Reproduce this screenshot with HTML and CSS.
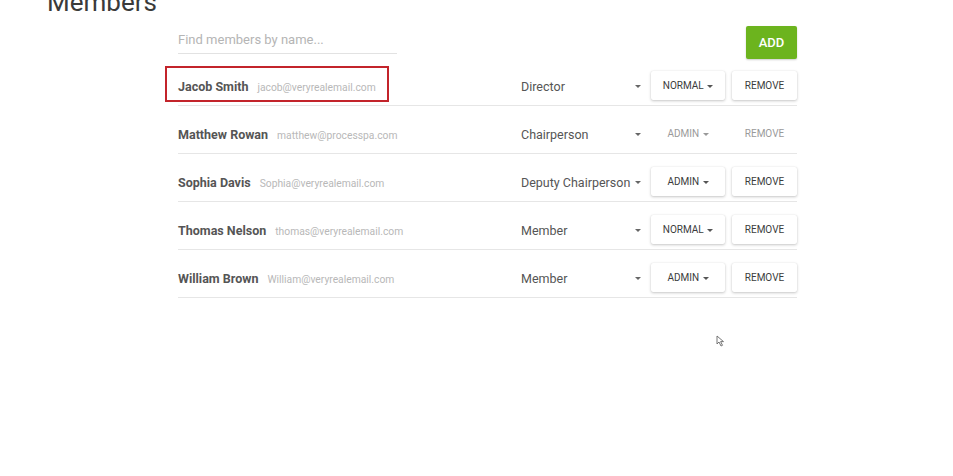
FILE: index.html
```html
<!DOCTYPE html>
<html>
<head>
<meta charset="utf-8">
<link rel="stylesheet" href="styles.css">
</head>
<body>
<h1 class="title">Members</h1>
<main class="panel">
  <div class="toolbar">
    <div class="search">Find members by name...</div>
    <button class="add">ADD</button>
  </div>
  <ul class="list">
    <li class="row">
      <div class="who"><span class="name">Jacob Smith</span><span class="email">jacob@veryrealemail.com</span></div>
      <div class="role">Director<span class="caret"></span></div>
      <button class="btn perm">NORMAL <span class="mini"></span></button>
      <button class="btn rm">REMOVE</button>
      <div class="highlight"></div>
    </li>
    <li class="row flat">
      <div class="who"><span class="name">Matthew Rowan</span><span class="email">matthew@processpa.com</span></div>
      <div class="role">Chairperson<span class="caret"></span></div>
      <button class="btn perm">ADMIN <span class="mini"></span></button>
      <button class="btn rm">REMOVE</button>
    </li>
    <li class="row">
      <div class="who"><span class="name">Sophia Davis</span><span class="email">Sophia@veryrealemail.com</span></div>
      <div class="role">Deputy Chairperson<span class="caret"></span></div>
      <button class="btn perm">ADMIN <span class="mini"></span></button>
      <button class="btn rm">REMOVE</button>
    </li>
    <li class="row">
      <div class="who"><span class="name">Thomas Nelson</span><span class="email">thomas@veryrealemail.com</span></div>
      <div class="role">Member<span class="caret"></span></div>
      <button class="btn perm">NORMAL <span class="mini"></span></button>
      <button class="btn rm">REMOVE</button>
    </li>
    <li class="row">
      <div class="who"><span class="name">William Brown</span><span class="email">William@veryrealemail.com</span></div>
      <div class="role">Member<span class="caret"></span></div>
      <button class="btn perm">ADMIN <span class="mini"></span></button>
      <button class="btn rm">REMOVE</button>
    </li>
  </ul>
</main>
<svg class="cursor" width="10" height="12" viewBox="0 0 10 12"><path d="M1 1 L1 9 L3 7 L5 11 L6.5 10.3 L4.6 6.6 L7.5 6.6 Z" fill="#fff" stroke="#666" stroke-width="0.9"/></svg>
</body>
</html>
```
FILE: styles.css
```css
* { box-sizing: border-box; }
html, body { margin: 0; padding: 0; background: #fff; }
body {
  font-family: Roboto, "Noto Sans", "Liberation Sans", sans-serif;
  color: #555;
  width: 953px;
  height: 476px;
  overflow: hidden;
  position: relative;
}
.title {
  margin: -13px 0 0 47px;
  font-size: 26px;
  font-weight: 400;
  line-height: 30px;
  color: #3a3a3a;
  height: 17px;
}
.panel {
  margin-left: 178px;
  width: 619px;
}
.toolbar {
  display: flex;
  justify-content: space-between;
  align-items: flex-start;
  height: 32px;
  margin-top: 22px;
}
.search {
  width: 219px;
  height: 28px;
  border-bottom: 1px solid #e2e2e2;
  font-size: 13px;
  color: #b5b5b5;
  padding-top: 6px;
}
.add {
  width: 51px;
  height: 33px;
  border: none;
  border-radius: 2px;
  background: #6cb41e;
  color: #fff;
  font-family: inherit;
  font-size: 13px;
  font-weight: 500;
  padding: 0;
  box-shadow: 0 1px 2px rgba(0,0,0,0.2);
}
.list { list-style: none; margin: 0; padding: 0; }
.row {
  position: relative;
  display: flex;
  align-items: center;
  height: 48px;
  padding: 13px 0 5px;
  border-bottom: 1px solid #e6e6e6;
}
.who { flex: 1; display: flex; align-items: baseline; gap: 9px; padding-top: 1px; }
.name { font-size: 12.5px; font-weight: 700; color: #555; }
.email { font-size: 10.3px; color: #b8b8b8; }
.role {
  width: 122px;
  font-size: 12.5px;
  color: #555;
  position: relative;
  padding-top: 1px;
}
.caret {
  position: absolute;
  right: 2px;
  top: 7px;
  border-left: 3px solid transparent;
  border-right: 3px solid transparent;
  border-top: 3px solid #666;
}
.btn {
  height: 29px;
  border: none;
  border-radius: 2px;
  background: #fff;
  font-family: inherit;
  font-size: 10px;
  font-weight: 400;
  color: #3c3c3c;
  padding: 0;
  box-shadow: 0 1px 3px rgba(0,0,0,0.22), 0 0 1px rgba(0,0,0,0.12);
}
.perm { width: 74px; margin-left: 8px; }
.rm { width: 65px; margin-left: 7px; }
.mini {
  display: inline-block;
  vertical-align: middle;
  margin-left: 1px;
  border-left: 3px solid transparent;
  border-right: 3px solid transparent;
  border-top: 3px solid #555;
}
.flat .btn { box-shadow: none; color: #9a9a9a; }
.flat .mini { border-top-color: #999; }
.highlight {
  position: absolute;
  left: -13px;
  top: 8px;
  width: 224px;
  height: 36px;
  border: 2px solid #c3242b;
}
.cursor { position: absolute; left: 716px; top: 335px; }
```
